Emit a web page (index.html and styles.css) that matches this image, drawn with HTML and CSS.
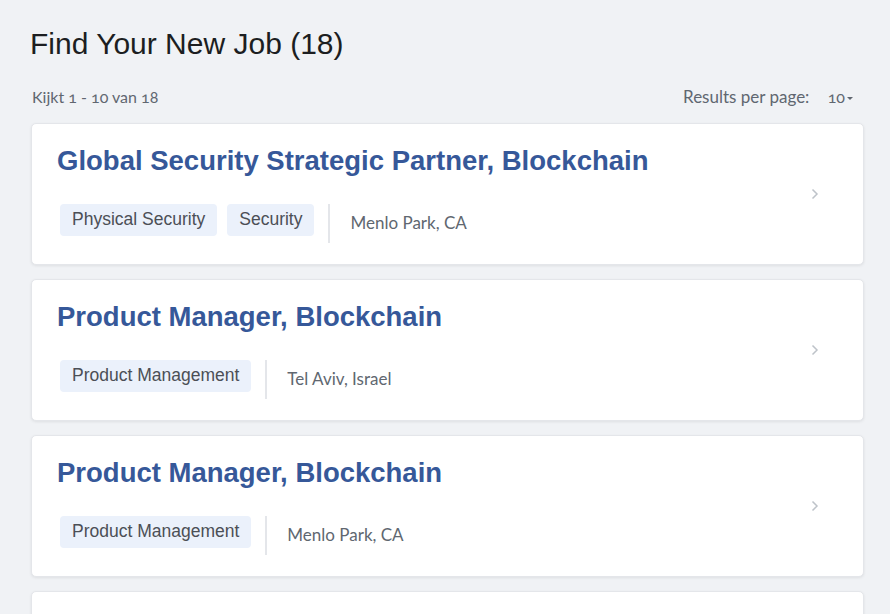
FILE: index.html
```html
<!DOCTYPE html>
<html lang="nl">
<head>
  <meta charset="UTF-8">
  <title>Find Your New Job</title>
  <link rel="stylesheet" href="styles.css">
</head>
<body>

<div class="page">
  <h1 class="page-title">Find Your New Job (18)</h1>

  <div class="results-bar">
    <span class="results-count">Kijkt 1 - 10 van 18</span>
    <span class="per-page">Results per page: <span class="per-page-value">10<span class="caret"></span></span></span>
  </div>

  <div class="job-list">
    <a class="job-card" href="#">
      <div class="job-main">
        <div class="job-title">Global Security Strategic Partner, Blockchain</div>
        <div class="job-meta">
          <span class="tag">Physical Security</span>
          <span class="tag">Security</span>
          <span class="divider"></span>
          <span class="location">Menlo Park, CA</span>
        </div>
      </div>
      <svg class="chevron" width="8" height="12" viewBox="0 0 8 12"><path d="M1.5 1.5 L6 6 L1.5 10.5" fill="none" stroke="#bec3c9" stroke-width="1.5"/></svg>
    </a>

    <a class="job-card" href="#">
      <div class="job-main">
        <div class="job-title">Product Manager, Blockchain</div>
        <div class="job-meta">
          <span class="tag">Product Management</span>
          <span class="divider"></span>
          <span class="location">Tel Aviv, Israel</span>
        </div>
      </div>
      <svg class="chevron" width="8" height="12" viewBox="0 0 8 12"><path d="M1.5 1.5 L6 6 L1.5 10.5" fill="none" stroke="#bec3c9" stroke-width="1.5"/></svg>
    </a>

    <a class="job-card" href="#">
      <div class="job-main">
        <div class="job-title">Product Manager, Blockchain</div>
        <div class="job-meta">
          <span class="tag">Product Management</span>
          <span class="divider"></span>
          <span class="location">Menlo Park, CA</span>
        </div>
      </div>
      <svg class="chevron" width="8" height="12" viewBox="0 0 8 12"><path d="M1.5 1.5 L6 6 L1.5 10.5" fill="none" stroke="#bec3c9" stroke-width="1.5"/></svg>
    </a>

    <a class="job-card" href="#">
      <div class="job-main">
        <div class="job-title">Product Manager, Blockchain</div>
        <div class="job-meta">
          <span class="tag">Product Management</span>
          <span class="divider"></span>
          <span class="location">Menlo Park, CA</span>
        </div>
      </div>
      <svg class="chevron" width="8" height="12" viewBox="0 0 8 12"><path d="M1.5 1.5 L6 6 L1.5 10.5" fill="none" stroke="#bec3c9" stroke-width="1.5"/></svg>
    </a>
  </div>
</div>

</body>
</html>
```

FILE: styles.css
```css
body {
  margin: 0;
  background: #f0f2f5;
  font-family: "Liberation Sans", Arial, sans-serif;
  color: #1c1e21;
  overflow: hidden;
}
.page {
  padding: 26px 26px 0 31px;
}
.page-title {
  margin: 0 0 0 -1px;
  font-size: 30px;
  font-weight: normal;
  line-height: 36px;
  color: #1c1e21;
}
.results-bar {
  display: flex;
  justify-content: space-between;
  align-items: center;
  margin: 24px 0 16px 1px;
  font-family: Lato, "Open Sans", sans-serif;
  font-size: 16px;
  color: #606770;
  font-feature-settings: "onum";
}
.per-page {
  margin-right: 11px;
  font-size: 17px;
}
.per-page-value {
  margin-left: 14px;
  font-size: 16px;
}
.caret {
  display: inline-block;
  margin-left: 2px;
  vertical-align: middle;
  border-left: 3px solid transparent;
  border-right: 3px solid transparent;
  border-top: 3px solid #606770;
}
.job-list {
  display: flex;
  flex-direction: column;
  gap: 14px;
}
.job-card {
  display: flex;
  align-items: center;
  height: 142px;
  box-sizing: border-box;
  padding: 20px 44px 20px 25px;
  background: #fff;
  border: 1px solid #e4e6ea;
  border-radius: 5px;
  box-shadow: 0 1px 3px rgba(0, 0, 0, 0.08);
  text-decoration: none;
}
.job-main {
  flex: 1;
  align-self: flex-start;
}
.job-title {
  font-size: 27.5px;
  font-weight: bold;
  line-height: 34px;
  color: #365899;
}
.job-meta {
  display: flex;
  align-items: flex-start;
  margin-top: 26px;
  margin-left: 3px;
}
.tag {
  display: inline-block;
  padding: 0 12px;
  height: 32px;
  line-height: 30px;
  margin-right: 10px;
  background: #ebf1fb;
  border-radius: 4px;
  font-size: 17.5px;
  color: #4b4f56;
}
.divider {
  width: 2px;
  height: 39px;
  margin: 0 20px 0 4px;
  background: #e4e6ea;
}
.location {
  font-family: Lato, "Open Sans", sans-serif;
  font-size: 17px;
  line-height: 38px;
  color: #606770;
}
.chevron {
  flex: none;
}
```
